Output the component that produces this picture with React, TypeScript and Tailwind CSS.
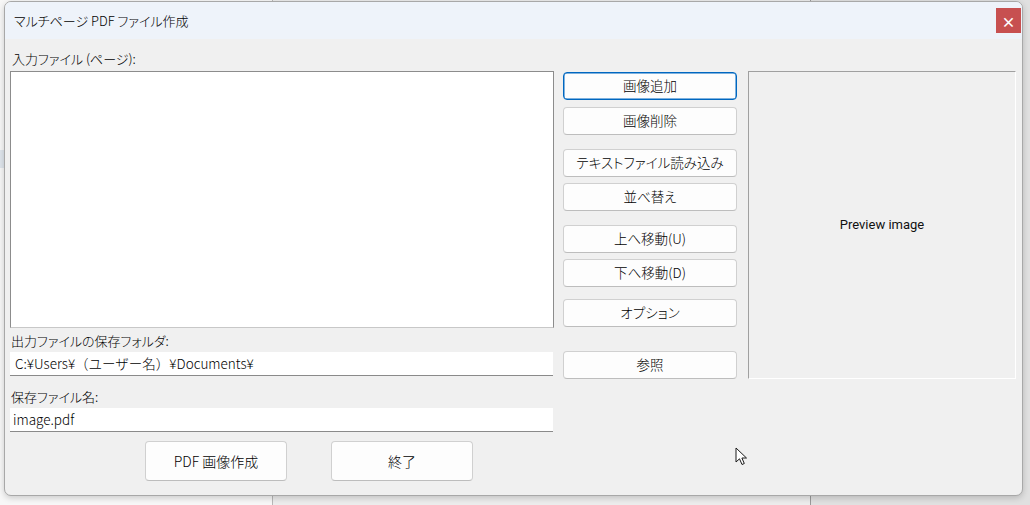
import React from "react";

const jp = "font-['Noto_Sans_CJK_JP','Noto_Sans',sans-serif]";
const palt = "[font-feature-settings:'palt']";

function WinButton({
  label,
  focused = false,
  className = "",
}: {
  label: React.ReactNode;
  focused?: boolean;
  className?: string;
}) {
  return (
    <button
      className={`flex items-center justify-center rounded-[4px] border bg-[#fdfdfd] text-[13.5px] font-light leading-none text-black ${palt} ${
        focused
          ? "border-[#0067c0] shadow-[inset_0_0_0_0.5px_#0067c0]"
          : "border-[#d0d0d0] border-b-[#bdbdbd]"
      } ${className}`}
    >
      {label}
    </button>
  );
}

function Cursor() {
  return (
    <svg
      width="14"
      height="20"
      viewBox="0 0 14 20"
      className="absolute left-[735px] top-[447px]"
    >
      <path
        d="M1 1 L1 15 L4.5 11.8 L7 17.5 L9.3 16.5 L6.9 11 L11.5 11 Z"
        fill="#ffffff"
        stroke="#1a1a1a"
        strokeWidth="1"
        strokeLinejoin="round"
      />
    </svg>
  );
}

export default function App() {
  return (
    <div
      className={`relative h-[505px] w-[1030px] overflow-hidden bg-[#e2e2e2] ${jp}`}
    >
      {/* desktop behind the dialog */}
      <div className="absolute left-0 top-0 h-full w-[272px] bg-[#f7f7f7]" />
      <div className="absolute left-[272px] top-0 h-full w-[538px] border-l border-[#b8b8b8] bg-[#ececec]" />
      <div className="absolute left-[810px] top-0 h-full w-[220px] border-l border-[#9a9a9a] bg-[#e0e0e0]" />
      <div className="absolute left-0 top-[150px] h-[18px] w-[4px] bg-[#dfe5ec]" />

      {/* dialog window */}
      <div className="absolute left-[4px] top-[1px] flex h-[495px] w-[1019px] flex-col overflow-hidden rounded-[7px] border border-[#a8a8a8] bg-[#f0f0f0] shadow-[0_2px_6px_rgba(0,0,0,0.18)]">
        {/* title bar */}
        <div className="flex h-[37px] shrink-0 items-center justify-between bg-[#eef3fa] pl-[9px] pr-px">
          <span className={`text-[13px] font-light text-black ${palt}`}>
            マルチページ PDF ファイル作成
          </span>
          <div className="flex h-[25px] w-[25px] items-center justify-center bg-[#c75050] text-[14px] font-bold leading-none text-white">
            ×
          </div>
        </div>

        {/* body */}
        <div className="flex flex-1 px-[5px] text-[13px] font-light text-black">
          {/* left column */}
          <div className="flex w-[544px] flex-col">
            <div className={`flex h-[32px] items-end pb-[6px] pl-[2px] leading-none ${palt}`}>
              入力ファイル (ページ):
            </div>
            <div className="h-[257px] border border-[#8c8c8c] border-b-[#c8c8c8] bg-white" />
            <div className={`flex h-[24px] items-end pb-[5px] pl-px leading-none ${palt}`}>
              出力ファイルの保存フォルダ:
            </div>
            <div className="flex h-[24px] w-[543px] items-center border-b border-[#8a8a8a] bg-white pl-[5px] text-[13.5px]">
              C:¥Users¥（ユーザー名）¥Documents¥
            </div>
            <div className={`flex h-[32px] items-end pb-[5px] pl-px leading-none ${palt}`}>
              保存ファイル名:
            </div>
            <div className="flex h-[24px] w-[543px] items-center border-b border-[#8a8a8a] bg-white pl-[3px] text-[13.5px]">
              image.pdf
            </div>
            <div className="mt-[9px] flex gap-[44px] pl-[135px]">
              <WinButton label="PDF 画像作成" className="h-[40px] w-[142px] !text-[14px]" />
              <WinButton label="終了" className="h-[40px] w-[142px] !text-[14px]" />
            </div>
          </div>

          {/* button column */}
          <div className="ml-[9px] flex w-[174px] flex-col pt-[33px]">
            <WinButton label="画像追加" focused className="h-[28px]" />
            <WinButton label="画像削除" className="mt-[7px] h-[28px]" />
            <WinButton label="テキストファイル読み込み" className="mt-[14px] h-[28px]" />
            <WinButton label="並べ替え" className="mt-[6px] h-[28px]" />
            <WinButton label="上へ移動(U)" className="mt-[14px] h-[28px]" />
            <WinButton label="下へ移動(D)" className="mt-[6px] h-[28px]" />
            <WinButton label="オプション" className="mt-[12px] h-[28px]" />
            <WinButton label="参照" className="mt-[24px] h-[28px]" />
          </div>

          {/* preview */}
          <div className="ml-[11px] mt-[32px] flex h-[308px] w-[268px] items-center justify-center border border-[#a0a0a0] border-b-white border-r-white">
            <span className="font-['Roboto',sans-serif] text-[13px] font-normal text-[#111]">
              Preview image
            </span>
          </div>
        </div>
      </div>

      <Cursor />
    </div>
  );
}
